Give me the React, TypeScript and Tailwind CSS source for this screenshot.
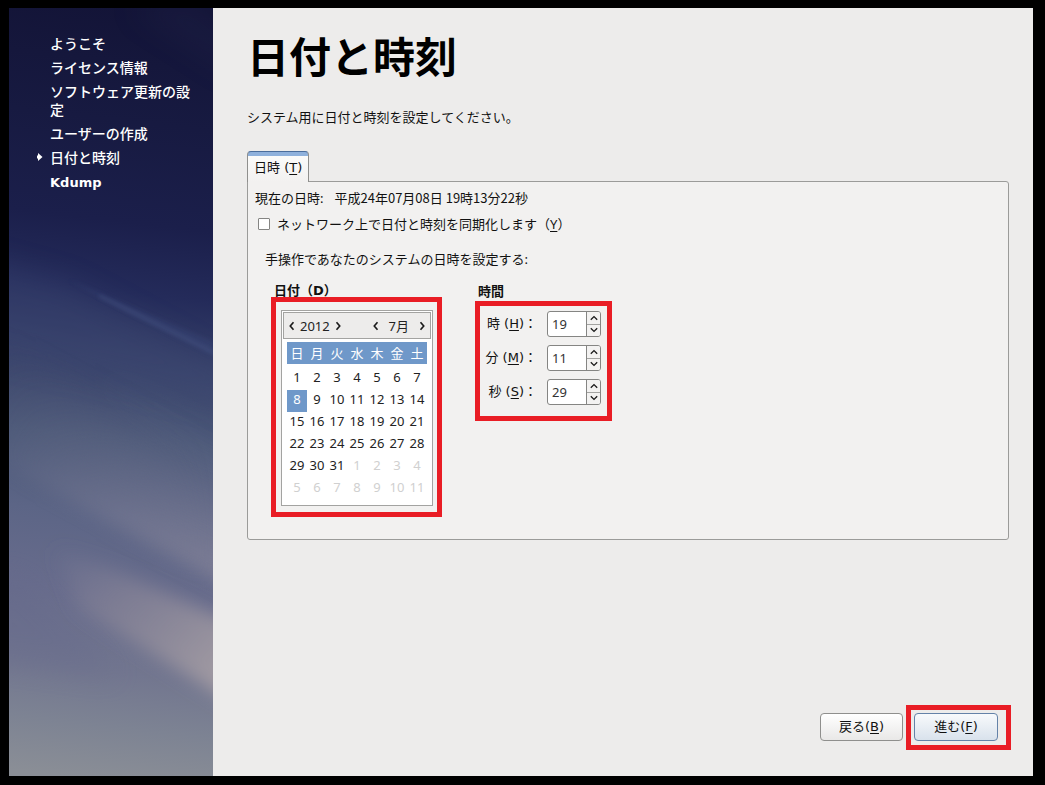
import { useState, type ReactNode } from "react";

const STEPS = [
  "ようこそ",
  "ライセンス情報",
  "ソフトウェア更新の設定",
  "ユーザーの作成",
  "日付と時刻",
  "Kdump",
];
const CURRENT_STEP = "日付と時刻";

const WEEKDAYS = ["日", "月", "火", "水", "木", "金", "土"];
const WEEKS = [
  [1, 2, 3, 4, 5, 6, 7],
  [8, 9, 10, 11, 12, 13, 14],
  [15, 16, 17, 18, 19, 20, 21],
  [22, 23, 24, 25, 26, 27, 28],
  [29, 30, 31, 1, 2, 3, 4],
  [5, 6, 7, 8, 9, 10, 11],
];

function Chevron({ d, className }: { d: string; className: string }) {
  return (
    <svg viewBox="0 0 8 8" className={className} fill="none" stroke="#1a1a1a" strokeWidth="1.3" aria-hidden="true">
      <path d={d} />
    </svg>
  );
}

const LEFT = "M5.2 1 L2.6 4 L5.2 7";
const RIGHT = "M2.8 1 L5.4 4 L2.8 7";
const UP = "M0.8 5.8 L4 2.6 L7.2 5.8";
const DOWN = "M0.8 2.2 L4 5.4 L7.2 2.2";

function Highlight({ className }: { className: string }) {
  return <span aria-hidden="true" className={`pointer-events-none absolute border-5 border-[#e91d25] ${className}`} />;
}

function Key({ children }: { children: ReactNode }) {
  return <span className="underline underline-offset-2">{children}</span>;
}

function NightSky() {
  return (
    <svg
      className="absolute inset-0 h-full w-full"
      viewBox="0 0 204 768"
      preserveAspectRatio="none"
      aria-hidden="true"
    >
      <defs>
        <linearGradient id="sky" gradientUnits="userSpaceOnUse" x1="150" y1="0" x2="60" y2="768">
          <stop offset="0" stopColor="#131437" />
          <stop offset="0.15" stopColor="#171a41" />
          <stop offset="0.28" stopColor="#1b1f4b" />
          <stop offset="0.37" stopColor="#242b5a" />
          <stop offset="0.46" stopColor="#374169" />
          <stop offset="0.56" stopColor="#4b5878" />
          <stop offset="0.66" stopColor="#5c6586" />
          <stop offset="0.76" stopColor="#686c8c" />
          <stop offset="0.86" stopColor="#72768f" />
          <stop offset="0.93" stopColor="#7d8393" />
          <stop offset="1" stopColor="#8a8e96" />
        </linearGradient>
        <linearGradient id="haze" gradientUnits="userSpaceOnUse" x1="204" y1="430" x2="142" y2="545">
          <stop offset="0" stopColor="#7d7c94" stopOpacity="0" />
          <stop offset="1" stopColor="#8a889b" stopOpacity="0.75" />
        </linearGradient>
        <linearGradient id="across" x1="0" y1="0" x2="1" y2="0">
          <stop offset="0" stopColor="#222" />
          <stop offset="1" stopColor="#fff" />
        </linearGradient>
        <mask id="sideways" maskUnits="userSpaceOnUse" x="0" y="0" width="204" height="768">
          <rect width="204" height="768" fill="url(#across)" />
        </mask>
        <linearGradient id="fade" gradientUnits="userSpaceOnUse" x1="40" y1="540" x2="204" y2="690">
          <stop offset="0" stopColor="#85839a" stopOpacity="0" />
          <stop offset="0.4" stopColor="#8b8798" stopOpacity="0.6" />
          <stop offset="1" stopColor="#a79fa5" stopOpacity="0.95" />
        </linearGradient>
        <filter id="soft" x="-30%" y="-30%" width="160%" height="160%">
          <feGaussianBlur stdDeviation="14" />
        </filter>
        <filter id="mid" x="-30%" y="-30%" width="160%" height="160%">
          <feGaussianBlur stdDeviation="9" />
        </filter>
        <filter id="thin" x="-30%" y="-30%" width="160%" height="160%">
          <feGaussianBlur stdDeviation="2" />
        </filter>
      </defs>
      <rect width="204" height="768" fill="url(#sky)" />
      <path d="M120 0 L230 70 L230 30 L180 -10 Z" fill="#2a2d55" opacity="0.2" filter="url(#soft)" />
      <path d="M-30 250 L60 275 L230 365 L230 400 L-30 340 Z" fill="#414c76" opacity="0.35" filter="url(#soft)" />
      <path d="M60 272 L204 334 L204 348 L120 305 Z" fill="#3a4a7c" opacity="0.35" filter="url(#thin)" />
      <path d="M90 288 L210 347" fill="none" stroke="#5a6a98" strokeWidth="1.5" opacity="0.5" filter="url(#thin)" />
      <path d="M90 365 L230 430 L230 475 L120 400 Z" fill="#65728f" opacity="0.15" filter="url(#soft)" />
      <g mask="url(#sideways)">
        <path d="M-30 250 L240 250 L240 590 L110 520 L-30 445 Z" fill="url(#haze)" filter="url(#mid)" />
      </g>
      <path d="M-30 570 L10 570 L70 625 L110 670 L-30 650 Z" fill="#62668a" opacity="0.3" filter="url(#soft)" />
      <path d="M40 535 L100 560 L245 624 L245 708 L150 650 L70 600 Z" fill="url(#fade)" filter="url(#mid)" />
    </svg>
  );
}

function Sidebar() {
  return (
    <aside className="relative w-[204px] shrink-0 overflow-hidden bg-[#171a41]">
      <NightSky />
      <ol className="relative flex flex-col gap-1.5 pt-[27px] pr-3 pl-[41px] text-sm leading-[18px] font-medium text-white">
        {STEPS.map((step) => (
          <li key={step} aria-current={step === CURRENT_STEP ? "step" : undefined} className="relative">
            {step === CURRENT_STEP && (
              <svg viewBox="0 0 6 8" className="absolute top-1 -left-[13px] h-2 w-1.5" fill="#fff" aria-hidden="true">
                <path d="M1 0 L5.5 4 L1 8 L1 5.5 L0 5.5 L0 2.5 L1 2.5 Z" />
              </svg>
            )}
            {step === "Kdump" ? (
              <span className="font-['DejaVu_Sans',sans-serif] text-[13px] font-bold">{step}</span>
            ) : (
              step
            )}
          </li>
        ))}
      </ol>
    </aside>
  );
}

function Calendar() {
  const [selected, setSelected] = useState(8);
  return (
    <div className="w-[152px] border border-[#a3a3a1] bg-white p-px pb-[5px] text-[#222]">
      <div className="flex h-[27px] items-center justify-between border border-[#a3a3a1] bg-[#edeceb] px-[3px]">
        <div className="flex items-center gap-[3px]">
          <button type="button" aria-label="前の年">
            <Chevron d={LEFT} className="h-2.5 w-2.5" />
          </button>
          <span>2012</span>
          <button type="button" aria-label="次の年">
            <Chevron d={RIGHT} className="h-2.5 w-2.5" />
          </button>
        </div>
        <div className="flex items-center gap-2">
          <button type="button" aria-label="前の月">
            <Chevron d={LEFT} className="h-2.5 w-2.5" />
          </button>
          <span>7月</span>
          <button type="button" aria-label="次の月">
            <Chevron d={RIGHT} className="h-2.5 w-2.5" />
          </button>
        </div>
      </div>
      <table className="mx-auto mt-[3px] w-[140px] table-fixed border-collapse text-center leading-[18px]">
        <thead>
          <tr className="h-[22px] bg-[#6f98c9] text-white">
            {WEEKDAYS.map((day) => (
              <th key={day} scope="col" className="p-0 font-normal">
                {day}
              </th>
            ))}
          </tr>
          <tr className="h-1" />
        </thead>
        <tbody>
          {WEEKS.map((week, row) => (
            <tr key={row} className="h-[22px]">
              {week.map((day, col) => {
                const other = row * 7 + col >= 31;
                const active = !other && day === selected;
                return (
                  <td key={col} className={active ? "bg-[#6f98c9] p-0 text-white" : "p-0"}>
                    <button
                      type="button"
                      disabled={other}
                      onClick={() => setSelected(day)}
                      className={other ? "block w-full pb-1 text-[#d0d0d0]" : "block w-full pb-1"}
                    >
                      {day}
                    </button>
                  </td>
                );
              })}
            </tr>
          ))}
        </tbody>
      </table>
    </div>
  );
}

function TimeField({ id, unit, hotkey, initial, max }: { id: string; unit: string; hotkey: string; initial: number; max: number }) {
  const [value, setValue] = useState(initial);
  const step = (by: number) => setValue((value + by + max) % max);
  return (
    <div className="flex items-center gap-2.5">
      <label
        htmlFor={id}
        className="w-[52px] text-right font-['DejaVu_Sans','Noto_Sans_CJK_JP',sans-serif] whitespace-nowrap"
      >
        {unit} (<Key>{hotkey}</Key>)：
      </label>
      <div className="flex h-[26px] w-[54px] overflow-hidden rounded-[3px] border border-[#858583] bg-white">
        <input
          id={id}
          type="text"
          inputMode="numeric"
          value={value}
          onChange={(event) => setValue(Number(event.target.value) || 0)}
          className="w-full min-w-0 flex-1 bg-transparent pl-1 text-[#333] outline-none"
        />
        <div className="flex w-3.5 shrink-0 flex-col divide-y divide-[#a3a3a1] border-l border-[#858583] bg-[#f3f2f1]">
          <button type="button" aria-label="増やす" onClick={() => step(1)} className="flex flex-1 items-center justify-center">
            <Chevron d={UP} className="h-2 w-2" />
          </button>
          <button type="button" aria-label="減らす" onClick={() => step(-1)} className="flex flex-1 items-center justify-center">
            <Chevron d={DOWN} className="h-2 w-2" />
          </button>
        </div>
      </div>
    </div>
  );
}

export default function App() {
  const [sync, setSync] = useState(false);
  return (
    <div className="flex min-h-screen bg-black pt-2 pr-3 pb-[9px] pl-[9px] font-['Noto_Sans','Noto_Sans_CJK_JP',sans-serif] text-[13px] leading-5 text-[#111]">
      <Sidebar />
      <main className="flex min-w-0 flex-1 flex-col bg-[#edeceb] pt-[25px] pr-6 pb-[35px] pl-[34px]">
        <h1 className="text-[42px] leading-[48px] font-bold text-black">日付と時刻</h1>
        <p className="mt-[26px]">システム用に日付と時刻を設定してください。</p>

        <div role="tablist" className="mt-6 flex">
          <button
            type="button"
            role="tab"
            id="tab-datetime"
            aria-selected="true"
            aria-controls="panel-datetime"
            className="relative z-10 -mb-px h-[31px] rounded-t-[4px] border border-b-0 border-[#8f8f8d] border-t-[#4a6d9c] bg-[linear-gradient(#8fb1dc_0_4px,#fbfbfa_4px,#f2f1f0)] px-1.5 pt-0.5 font-['DejaVu_Sans','Noto_Sans_CJK_JP',sans-serif]"
          >
            日時 (<Key>T</Key>)
          </button>
        </div>
        <section
          role="tabpanel"
          id="panel-datetime"
          aria-labelledby="tab-datetime"
          className="rounded-[3px] rounded-tl-none border border-[#9b9b99] bg-[#f2f1f0] px-1.5 pt-1.5 pb-[33px]"
        >
          <p className="flex gap-[11px] pl-px">
            <span>現在の日時:</span>
            <time className="font-['Noto_Sans_CJK_JP',sans-serif]">平成24年07月08日 19時13分22秒</time>
          </p>
          <label className="mt-1.5 flex items-center gap-[7px] pl-1">
            <input
              type="checkbox"
              checked={sync}
              onChange={(event) => setSync(event.target.checked)}
              className="h-3 w-3 appearance-none rounded-[1px] border border-[#858583] bg-white checked:bg-[#6f98c9]"
            />
            <span>
              ネットワーク上で日付と時刻を同期化します（<Key>Y</Key>）
            </span>
          </label>
          <p className="mt-[15px] pl-[11px]">手操作であなたのシステムの日時を設定する:</p>

          <div className="mt-3 flex pl-5">
            <div className="w-[204px]">
              <h2 className="font-['DejaVu_Sans','Noto_Sans_CJK_JP',sans-serif] font-bold">日付（D）</h2>
              <div className="relative mt-[9px] ml-[7px] w-fit">
                <Highlight className="-top-[13px] -right-[9px] -bottom-[11px] -left-[10px]" />
                <Calendar />
              </div>
            </div>
            <div>
              <h2 className="font-bold">時間</h2>
              <div className="relative mt-2.5 ml-[7px] flex w-fit flex-col gap-2">
                <Highlight className="-top-2.5 -right-[11px] -bottom-4 -left-[10px]" />
                <TimeField id="hour" unit="時" hotkey="H" initial={19} max={24} />
                <TimeField id="minute" unit="分" hotkey="M" initial={11} max={60} />
                <TimeField id="second" unit="秒" hotkey="S" initial={29} max={60} />
              </div>
            </div>
          </div>
        </section>

        <div className="mt-auto flex justify-end gap-[11px] pt-6 pr-[11px] font-['DejaVu_Sans','Noto_Sans_CJK_JP',sans-serif]">
          <button
            type="button"
            className="h-7 w-[83px] rounded-[4px] border border-[#8f8f8d] bg-gradient-to-b from-white to-[#e9e8e7]"
          >
            戻る(<Key>B</Key>)
          </button>
          <div className="relative">
            <Highlight className="-top-2 -right-[13px] -bottom-[9px] -left-2" />
            <button
              type="button"
              className="h-7 w-[84px] rounded-[4px] border border-[#6482a8] bg-gradient-to-b from-[#f8fafc] to-[#d9e2ec]"
            >
              進む(<Key>F</Key>)
            </button>
          </div>
        </div>
      </main>
    </div>
  );
}
